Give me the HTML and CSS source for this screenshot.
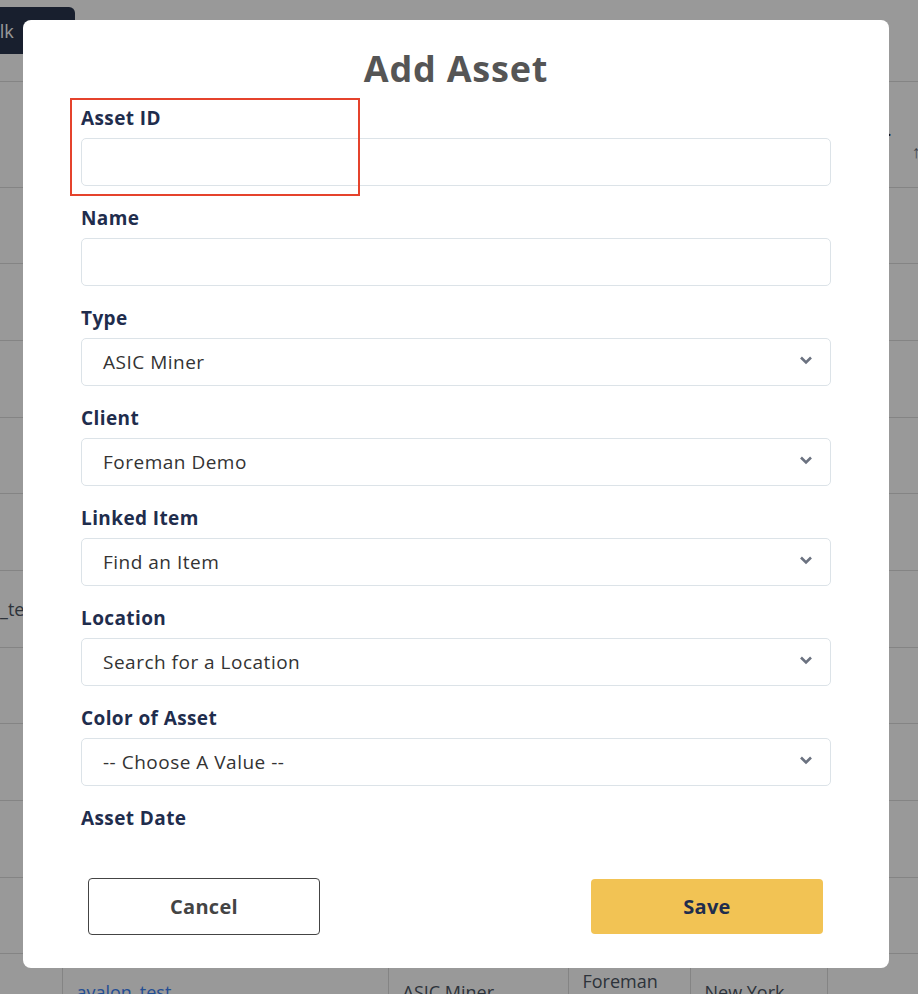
FILE: index.html
```html
<html>
  <head>
    <title>Add Asset</title>
    <link rel="stylesheet" href="styles.css">
  </head>
  <body>
    <div class="page">
      <div class="toolbar">
        <button class="bulkButton">Bulk</button>
      </div>
      <table class="assetTable">
        <thead>
          <tr>
            <th class="colCheck"></th>
            <th class="colName">Asset ID</th>
            <th class="colType">Type</th>
            <th class="colClient">Client</th>
            <th class="colLocation">Location</th>
            <th class="colSort"><span class="dot">.</span><span class="arrow">&#8593;</span></th>
          </tr>
        </thead>
        <tbody>
          <tr><td></td><td>antminer_s19</td><td>ASIC Miner</td><td>Foreman Demo</td><td>New York</td><td></td></tr>
          <tr><td></td><td>antminer_s19j</td><td>ASIC Miner</td><td>Foreman Demo</td><td>New York</td><td></td></tr>
          <tr><td></td><td>whatsminer_m30</td><td>ASIC Miner</td><td>Foreman Demo</td><td>New York</td><td></td></tr>
          <tr><td></td><td>avalon_1246</td><td>ASIC Miner</td><td>Foreman Demo</td><td>New York</td><td></td></tr>
          <tr><td></td><td>antminer_l7</td><td>ASIC Miner</td><td>Foreman Demo</td><td>New York</td><td></td></tr>
          <tr><td class="cut">_test</td><td>miner_test</td><td>ASIC Miner</td><td>Foreman Demo</td><td>New York</td><td></td></tr>
          <tr><td></td><td>antminer_s9</td><td>ASIC Miner</td><td>Foreman Demo</td><td>New York</td><td></td></tr>
          <tr><td></td><td>antminer_t19</td><td>ASIC Miner</td><td>Foreman Demo</td><td>New York</td><td></td></tr>
          <tr><td></td><td>whatsminer_m50</td><td>ASIC Miner</td><td>Foreman Demo</td><td>New York</td><td></td></tr>
          <tr><td></td><td>antminer_s21</td><td>ASIC Miner</td><td>Foreman Demo</td><td>New York</td><td></td></tr>
          <tr><td></td><td><a href="#">avalon_test</a></td><td>ASIC Miner</td><td class="wrap">Foreman Demo</td><td>New York</td><td></td></tr>
        </tbody>
      </table>
    </div>

    <div class="overlay">
      <div class="modal">
        <h1 class="modalTitle">Add Asset</h1>
        <div class="modalBody">
          <div class="field highlighted">
            <div class="highlightBox"></div>
            <label class="fieldLabel">Asset ID</label>
            <div class="input"></div>
          </div>
          <div class="field">
            <label class="fieldLabel">Name</label>
            <div class="input"></div>
          </div>
          <div class="field">
            <label class="fieldLabel">Type</label>
            <div class="input select">
              <span>ASIC Miner</span>
              <svg class="chevron" width="14" height="10" viewBox="0 0 14 10"><polyline points="2,2.5 7,7.5 12,2.5" fill="none" stroke="#6b7280" stroke-width="2.6"/></svg>
            </div>
          </div>
          <div class="field">
            <label class="fieldLabel">Client</label>
            <div class="input select">
              <span>Foreman Demo</span>
              <svg class="chevron" width="14" height="10" viewBox="0 0 14 10"><polyline points="2,2.5 7,7.5 12,2.5" fill="none" stroke="#6b7280" stroke-width="2.6"/></svg>
            </div>
          </div>
          <div class="field">
            <label class="fieldLabel">Linked Item</label>
            <div class="input select">
              <span>Find an Item</span>
              <svg class="chevron" width="14" height="10" viewBox="0 0 14 10"><polyline points="2,2.5 7,7.5 12,2.5" fill="none" stroke="#6b7280" stroke-width="2.6"/></svg>
            </div>
          </div>
          <div class="field">
            <label class="fieldLabel">Location</label>
            <div class="input select">
              <span>Search for a Location</span>
              <svg class="chevron" width="14" height="10" viewBox="0 0 14 10"><polyline points="2,2.5 7,7.5 12,2.5" fill="none" stroke="#6b7280" stroke-width="2.6"/></svg>
            </div>
          </div>
          <div class="field">
            <label class="fieldLabel">Color of Asset</label>
            <div class="input select">
              <span>-- Choose A Value --</span>
              <svg class="chevron" width="14" height="10" viewBox="0 0 14 10"><polyline points="2,2.5 7,7.5 12,2.5" fill="none" stroke="#6b7280" stroke-width="2.6"/></svg>
            </div>
          </div>
          <div class="field">
            <label class="fieldLabel">Asset Date</label>
            <div class="input"></div>
          </div>
        </div>
        <div class="modalFooter">
          <button class="btn btnCancel">Cancel</button>
          <button class="btn btnSave">Save</button>
        </div>
      </div>
    </div>
  </body>
</html>
```

FILE: styles.css
```css
body {
  margin: 0;
  overflow: hidden;
  font-family: "Open Sans", "Liberation Sans", sans-serif;
  background: #ffffff;
}

.page {
  width: 918px;
}

.toolbar {
  height: 82px;
  border-bottom: 1px solid #dddddd;
  box-sizing: border-box;
  padding-top: 7px;
}
.bulkButton {
  margin-left: -39px;
  width: 114px;
  height: 47px;
  padding: 0 16px;
  text-align: left;
  border: none;
  border-radius: 6px;
  background: #28354e;
  color: #ffffff;
  font-family: inherit;
  font-size: 18px;
  white-space: nowrap;
}

.assetTable {
  border-collapse: collapse;
  table-layout: fixed;
  width: 1027px;
  color: #4b5563;
  font-size: 18px;
}
.assetTable th,
.assetTable td {
  box-sizing: border-box;
}
.assetTable th {
  height: 105px;
  border-bottom: 1px solid #dddddd;
  text-align: left;
  font-weight: 600;
  color: #333333;
  padding: 0 14px;
}
.assetTable td {
  height: 76.7px;
  border-bottom: 1px solid #dddddd;
  border-left: 1px solid #dddddd;
  padding: 0 14px;
  vertical-align: middle;
  white-space: nowrap;
  overflow: hidden;
}
.assetTable td:first-child {
  border-left: none;
}
.assetTable td.wrap {
  white-space: normal;
  line-height: 22px;
}
.assetTable a {
  color: #3b82f6;
  text-decoration: none;
}
.colCheck { width: 62px; }
.colName { width: 326px; }
.colType { width: 180px; }
.colClient { width: 122px; }
.colLocation { width: 137px; }
.colSort { width: 200px; }
.assetTable th.colSort {
  padding-left: 60px;
  font-weight: 400;
  color: #6b7280;
}
.dot {
  display: inline-block;
  vertical-align: top;
  margin-top: 12px;
  color: #222222;
}
.arrow {
  display: inline-block;
  margin-left: 20px;
  margin-top: 34px;
}
.assetTable td.cut {
  padding-left: 0;
}

.overlay {
  position: fixed;
  top: 0;
  left: 0;
  right: 0;
  bottom: 0;
  background: rgba(0, 0, 0, 0.4);
  display: flex;
  justify-content: flex-start;
  align-items: flex-start;
  padding: 20px 0 0 23px;
}

.modal {
  width: 866px;
  box-sizing: border-box;
  padding: 26px 58px 33px 58px;
  background: #ffffff;
  border-radius: 8px;
}
.modalTitle {
  margin: 0;
  text-align: center;
  font-size: 36px;
  line-height: 46px;
  letter-spacing: 0.8px;
  font-weight: 700;
  color: #555555;
}
.modalBody {
  margin: 6px -12px 0 -12px;
  padding: 9px 12px 0 12px;
  height: 740px;
  box-sizing: border-box;
  overflow: hidden;
  display: flex;
  flex-direction: column;
  gap: 21px;
}

.field {
  display: flex;
  flex-direction: column;
  gap: 9px;
  flex-shrink: 0;
}
.highlighted {
  position: relative;
}
.highlightBox {
  position: absolute;
  top: -9px;
  left: -11px;
  width: 286px;
  height: 94px;
  border: 2px solid #e5432c;
}
.fieldLabel {
  font-size: 19px;
  line-height: 22px;
  font-weight: 700;
  letter-spacing: 0.4px;
  color: #1f2d4d;
}
.input {
  height: 48px;
  box-sizing: border-box;
  border: 1px solid #dce3e8;
  border-radius: 5px;
  background: #ffffff;
}
.select {
  display: flex;
  align-items: center;
  justify-content: space-between;
  padding: 0 17px 0 21px;
  font-size: 19px;
  letter-spacing: 0.5px;
  color: #333333;
}
.chevron {
  margin-top: -4px;
}

.modalFooter {
  margin-top: 40px;
  display: flex;
  justify-content: space-between;
  padding: 0 8px 0 7px;
}
.btn {
  width: 232px;
  height: 57px;
  border-radius: 4px;
  font-family: inherit;
  font-size: 20px;
  font-weight: 700;
  letter-spacing: 0.3px;
}
.btnCancel {
  background: #ffffff;
  border: 1px solid #444444;
  color: #444444;
}
.btnSave {
  background: #f2c354;
  border: none;
  color: #1f2d4d;
  margin-top: 1px;
  height: 55px;
}
```
